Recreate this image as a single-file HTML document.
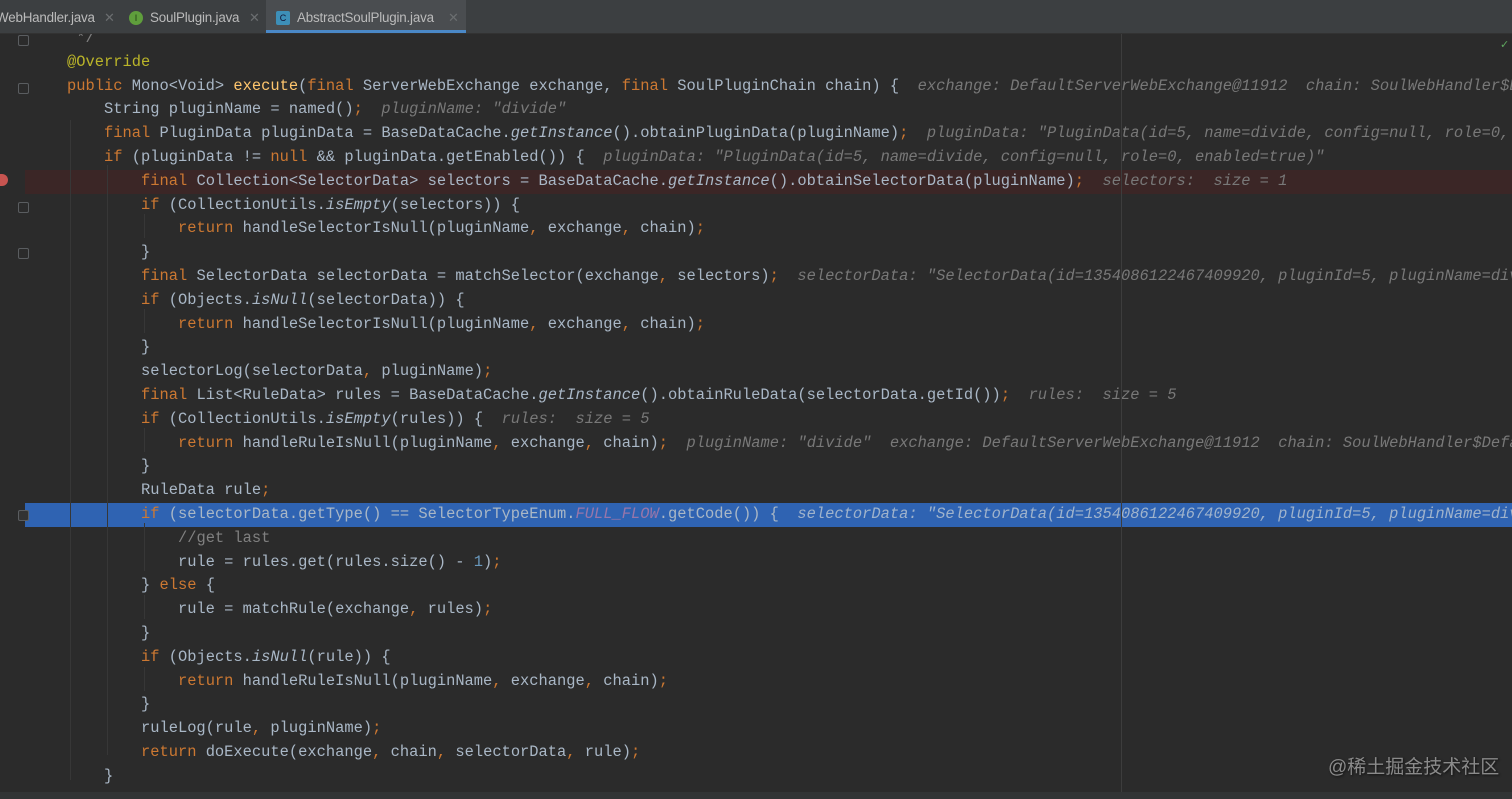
<!DOCTYPE html>
<html><head><meta charset="utf-8"><style>
html,body{margin:0;padding:0;background:#2b2b2b;width:1512px;height:799px;overflow:hidden}
#tabs{position:absolute;left:0;top:0;width:1512px;height:33px;background:#3c3f41;z-index:5;font-family:"Liberation Sans",sans-serif;font-size:13.4px;color:#bbbbbb;border-bottom:1px solid #323232}
.t{position:absolute;top:0;height:33px;line-height:36px;white-space:nowrap;letter-spacing:-0.2px}
.x{position:absolute;top:0;line-height:36px;color:#6b6e70;font-size:13px}
.ic{position:absolute;top:11px;width:14px;height:14px;border-radius:50%;text-align:center;font-size:9px;line-height:14px;color:#1e3a10;font-family:"Liberation Sans",sans-serif}
#code{position:absolute;left:0;top:27px;width:1512px;font-family:"Liberation Mono",monospace;font-size:15.42px;color:#a9b7c6;z-index:0;overflow:hidden}
.l{height:23.8px;line-height:23.8px;white-space:pre;position:relative;padding-left:67px;overflow:hidden}
.k{color:#cc7832}.m{color:#ffc66d}.a{color:#bbb529}.c{color:#808080}.h{color:#787878;font-style:italic}.i{font-style:italic}.p{color:#9876aa;font-style:italic}
.bp{background:#3b2626}
.sel{background:#2f63b2}
.bg{position:absolute;left:25px;right:0;top:0;bottom:0;z-index:-1}
#margin{position:absolute;left:1121px;top:33px;width:1px;height:760px;background:#3d3d3d;z-index:2}
.g{position:absolute;width:1px;background:#373737;z-index:1}
.fold{position:absolute;left:18px;width:9px;height:9px;border:1px solid #5a5d60;border-radius:2px;z-index:3}
#wm{position:absolute;left:1328px;top:752px;font-family:"Liberation Sans","Noto Sans CJK SC",sans-serif;font-size:19px;color:#8a8a8a;text-shadow:1px 1px 2px #111;z-index:6}
#bot{position:absolute;left:0;top:792px;width:1512px;height:7px;background:#323435;z-index:6}
</style></head><body>
<div id="tabs">
<div class="t" style="left:-4px">WebHandler.java</div><span class="x" style="left:104px">✕</span>
<span class="ic" style="left:129px;background:#5f9e3c">I</span>
<div class="t" style="left:150px">SoulPlugin.java</div><span class="x" style="left:249px">✕</span>
<div style="position:absolute;left:266px;top:0;width:200px;height:30px;background:#4a4d50;border-bottom:3px solid #4a88c7"></div>
<span class="ic" style="left:276px;background:#3d8fb8;border-radius:2px;color:#113">C</span>
<div class="t" style="left:297px">AbstractSoulPlugin.java</div><span class="x" style="left:448px">✕</span>
</div>
<div id="margin"></div>
<div class="g" style="left:70px;top:120px;height:660px"></div>
<div class="g" style="left:107px;top:165px;height:590px"></div>
<div class="g" style="left:144px;top:214px;height:24px"></div>
<div class="g" style="left:144px;top:309px;height:24px"></div>
<div class="g" style="left:144px;top:428px;height:24px"></div>
<div class="g" style="left:144px;top:523px;height:48px"></div>
<div class="g" style="left:144px;top:595px;height:24px"></div>
<div class="g" style="left:144px;top:667px;height:24px"></div>
<div class="fold" style="top:35px"></div>
<div class="fold" style="top:83px"></div>
<div class="fold" style="top:202px"></div>
<div class="fold" style="top:248px"></div>
<div class="fold" style="top:510px;background:#333"></div>
<div style="position:absolute;left:0;top:174px;width:8px;height:12px;background:#c75450;border-radius:0 6px 6px 0;z-index:3"></div>
<div style="position:absolute;left:1500px;top:38px;color:#5fa85f;font-size:11px;z-index:3">✓</div>
<div id="code">
<div class="l"><span class="c"> */</span></div>
<div class="l"><span class="a">@Override</span></div>
<div class="l"><span class="k">public </span>Mono&lt;Void&gt; <span class="m">execute</span>(<span class="k">final </span>ServerWebExchange exchange, <span class="k">final </span>SoulPluginChain chain) {  <span class="h">exchange: DefaultServerWebExchange@11912  chain: SoulWebHandler$DefaultSoulPluginChain@11913</span></div>
<div class="l">    String pluginName = named()<span class="k">;</span>  <span class="h">pluginName: "divide"</span></div>
<div class="l">    <span class="k">final </span>PluginData pluginData = BaseDataCache.<span class="i">getInstance</span>().obtainPluginData(pluginName)<span class="k">;</span>  <span class="h">pluginData: "PluginData(id=5, name=divide, config=null, role=0, enabled=true)"</span></div>
<div class="l">    <span class="k">if </span>(pluginData != <span class="k">null </span>&amp;&amp; pluginData.getEnabled()) {  <span class="h">pluginData: "PluginData(id=5, name=divide, config=null, role=0, enabled=true)"</span></div>
<div class="l"><div class="bg bp"></div>        <span class="k">final </span>Collection&lt;SelectorData&gt; selectors = BaseDataCache.<span class="i">getInstance</span>().obtainSelectorData(pluginName)<span class="k">;</span>  <span class="h">selectors:  size = 1</span></div>
<div class="l">        <span class="k">if </span>(CollectionUtils.<span class="i">isEmpty</span>(selectors)) {</div>
<div class="l">            <span class="k">return </span>handleSelectorIsNull(pluginName<span class="k">, </span>exchange<span class="k">, </span>chain)<span class="k">;</span></div>
<div class="l">        }</div>
<div class="l">        <span class="k">final </span>SelectorData selectorData = matchSelector(exchange<span class="k">, </span>selectors)<span class="k">;</span>  <span class="h">selectorData: "SelectorData(id=1354086122467409920, pluginId=5, pluginName=divide"</span></div>
<div class="l">        <span class="k">if </span>(Objects.<span class="i">isNull</span>(selectorData)) {</div>
<div class="l">            <span class="k">return </span>handleSelectorIsNull(pluginName<span class="k">, </span>exchange<span class="k">, </span>chain)<span class="k">;</span></div>
<div class="l">        }</div>
<div class="l">        selectorLog(selectorData<span class="k">, </span>pluginName)<span class="k">;</span></div>
<div class="l">        <span class="k">final </span>List&lt;RuleData&gt; rules = BaseDataCache.<span class="i">getInstance</span>().obtainRuleData(selectorData.getId())<span class="k">;</span>  <span class="h">rules:  size = 5</span></div>
<div class="l">        <span class="k">if </span>(CollectionUtils.<span class="i">isEmpty</span>(rules)) {  <span class="h">rules:  size = 5</span></div>
<div class="l">            <span class="k">return </span>handleRuleIsNull(pluginName<span class="k">, </span>exchange<span class="k">, </span>chain)<span class="k">;</span>  <span class="h">pluginName: "divide"  exchange: DefaultServerWebExchange@11912  chain: SoulWebHandler$DefaultSoulPluginChain</span></div>
<div class="l">        }</div>
<div class="l">        RuleData rule<span class="k">;</span></div>
<div class="l"><div class="bg sel"></div>        <span class="k">if </span>(selectorData.getType() == SelectorTypeEnum.<span class="p">FULL_FLOW</span>.getCode()) {  <span class="h" style="color:#9fb3cc">selectorData: "SelectorData(id=1354086122467409920, pluginId=5, pluginName=divide"</span></div>
<div class="l">            <span class="c">//get last</span></div>
<div class="l">            rule = rules.get(rules.size() - <span style="color:#6897bb">1</span>)<span class="k">;</span></div>
<div class="l">        } <span class="k">else </span>{</div>
<div class="l">            rule = matchRule(exchange<span class="k">, </span>rules)<span class="k">;</span></div>
<div class="l">        }</div>
<div class="l">        <span class="k">if </span>(Objects.<span class="i">isNull</span>(rule)) {</div>
<div class="l">            <span class="k">return </span>handleRuleIsNull(pluginName<span class="k">, </span>exchange<span class="k">, </span>chain)<span class="k">;</span></div>
<div class="l">        }</div>
<div class="l">        ruleLog(rule<span class="k">, </span>pluginName)<span class="k">;</span></div>
<div class="l">        <span class="k">return </span>doExecute(exchange<span class="k">, </span>chain<span class="k">, </span>selectorData<span class="k">, </span>rule)<span class="k">;</span></div>
<div class="l">    }</div>
</div>
<div id="wm">@稀土掘金技术社区</div>
<div id="bot"></div>
</body></html>
